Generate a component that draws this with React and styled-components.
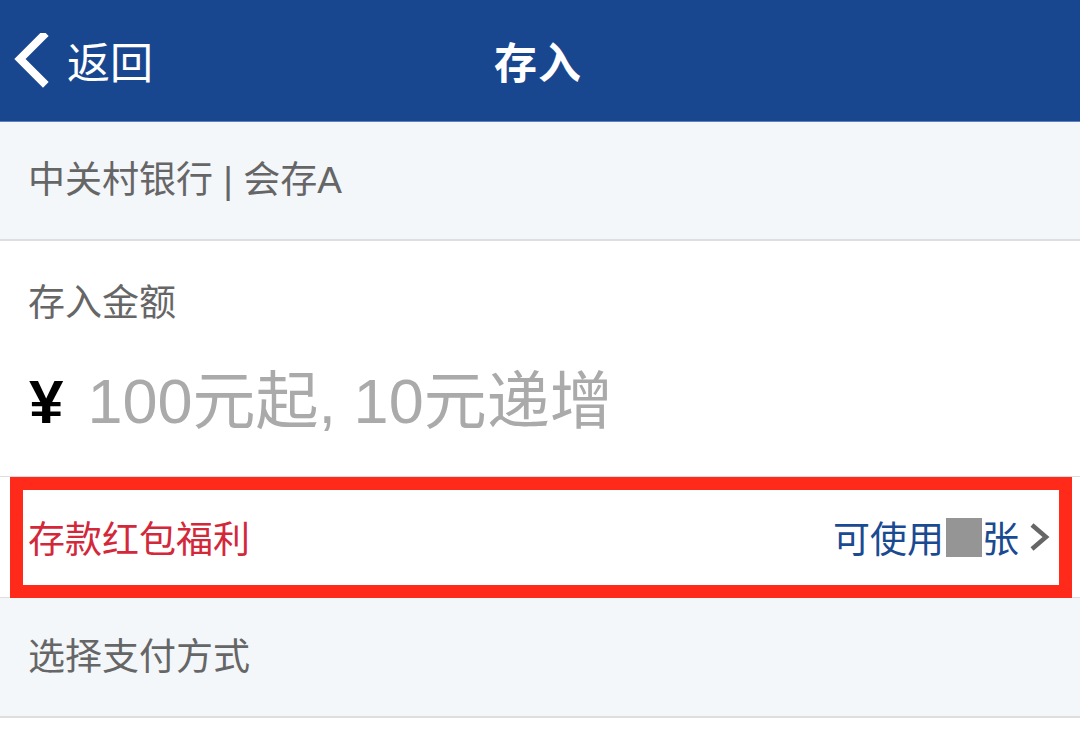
import React from "react";
import styled, { createGlobalStyle } from "styled-components";

const Global = createGlobalStyle`
  html, body { margin: 0; padding: 0; background: #ffffff; }
  body { font-family: "Liberation Sans", "Noto Sans CJK SC", sans-serif; }
  * { box-sizing: border-box; }
`;

const Page = styled.div`
  width: 1080px;
  display: flex;
  flex-direction: column;
`;

const NavBar = styled.header`
  height: 122px;
  background: #19478f;
  border-bottom: 1px solid #5b80bd;
  display: grid;
  grid-template-columns: 1fr auto 1fr;
  align-items: center;
  color: #ffffff;
`;

const BackButton = styled.div`
  display: flex;
  align-items: center;
  gap: 17px;
  padding-left: 14px;
  font-size: 43px;
  font-family: "Noto Sans CJK SC", sans-serif;
  font-weight: 400;
  line-height: 1;
`;

const Title = styled.h1`
  margin: 0 0 0 -4px;
  font-size: 43px;
  font-weight: 700;
  font-family: "Noto Sans CJK SC", sans-serif;
  line-height: 1;
  letter-spacing: 1px;
`;

const Section = styled.section`
  display: flex;
  flex-direction: column;
  justify-content: ${(p) => p.$justify || "center"};
  height: ${(p) => p.$height}px;
  background: ${(p) => (p.$grey ? "#f4f7fa" : "#ffffff")};
  border-bottom: ${(p) => p.$border || 2}px solid #dedede;
  padding: 0 28px;
`;

const Label = styled.div`
  font-family: "Liberation Sans", "Noto Sans CJK SC", sans-serif;
  font-size: 37px;
  color: #666666;
  line-height: 1;
`;

const AmountBlock = styled.div`
  display: flex;
  flex-direction: column;
  gap: 48px;
  padding-top: 44px;
`;

const AmountInput = styled.div`
  display: flex;
  align-items: center;
  gap: 24px;
  line-height: 1;
`;

const Currency = styled.span`
  font-family: "Liberation Sans", sans-serif;
  font-weight: 700;
  font-size: 62px;
  color: #000000;
  padding-left: 1px;
`;

const Placeholder = styled.span`
  font-family: "Liberation Sans", "Noto Sans CJK SC", sans-serif;
  font-size: 63px;
  color: #aaaaaa;
`;

const BonusRow = styled.div`
  position: relative;
  height: 121px;
  background: #ffffff;
  border-bottom: 1px solid #dedede;
  display: flex;
  align-items: center;
  justify-content: space-between;
  padding: 0 30px 0 28px;
`;

const Highlight = styled.div`
  position: absolute;
  left: 10px;
  right: 8px;
  top: 0;
  bottom: -1px;
  border: 13px solid #ff2a1a;
  pointer-events: none;
`;

const BonusTitle = styled.span`
  font-family: "Noto Sans CJK SC", sans-serif;
  font-size: 37px;
  color: #d3283a;
  line-height: 1;
`;

const BonusInfo = styled.span`
  display: flex;
  align-items: center;
  font-family: "Noto Sans CJK SC", sans-serif;
  font-size: 37px;
  color: #1a4a91;
  line-height: 1;
`;

const Masked = styled.span`
  display: inline-block;
  width: 36px;
  height: 39px;
  background: #959595;
  margin: 0 0 0 2px;
`;

const Chevron = styled.svg`
  margin-left: 9px;
  display: block;
`;

export default function App() {
  return (
    <>
      <Global />
      <Page>
        <NavBar>
          <BackButton>
            <svg width="36" height="56" viewBox="0 0 36 56">
              <path d="M29 3 L6 26 L29 49" fill="none" stroke="#ffffff" strokeWidth="8" strokeLinecap="square" />
            </svg>
            <span>返回</span>
          </BackButton>
          <Title>存入</Title>
          <div />
        </NavBar>

        <Section $grey $height={119}>
          <Label>中关村银行 | 会存A</Label>
        </Section>

        <Section $height={236} $border={1} $justify="flex-start">
          <AmountBlock>
            <Label>存入金额</Label>
            <AmountInput>
              <Currency>¥</Currency>
              <Placeholder>100元起, 10元递增</Placeholder>
            </AmountInput>
          </AmountBlock>
        </Section>

        <BonusRow>
          <BonusTitle>存款红包福利</BonusTitle>
          <BonusInfo>
            可使用<Masked />张
            <Chevron width="22" height="30" viewBox="0 0 22 30">
              <path d="M4 3 L18 15 L4 27" fill="none" stroke="#666666" strokeWidth="4.5" />
            </Chevron>
          </BonusInfo>
          <Highlight />
        </BonusRow>

        <Section $grey $height={120}>
          <Label>选择支付方式</Label>
        </Section>
      </Page>
    </>
  );
}
